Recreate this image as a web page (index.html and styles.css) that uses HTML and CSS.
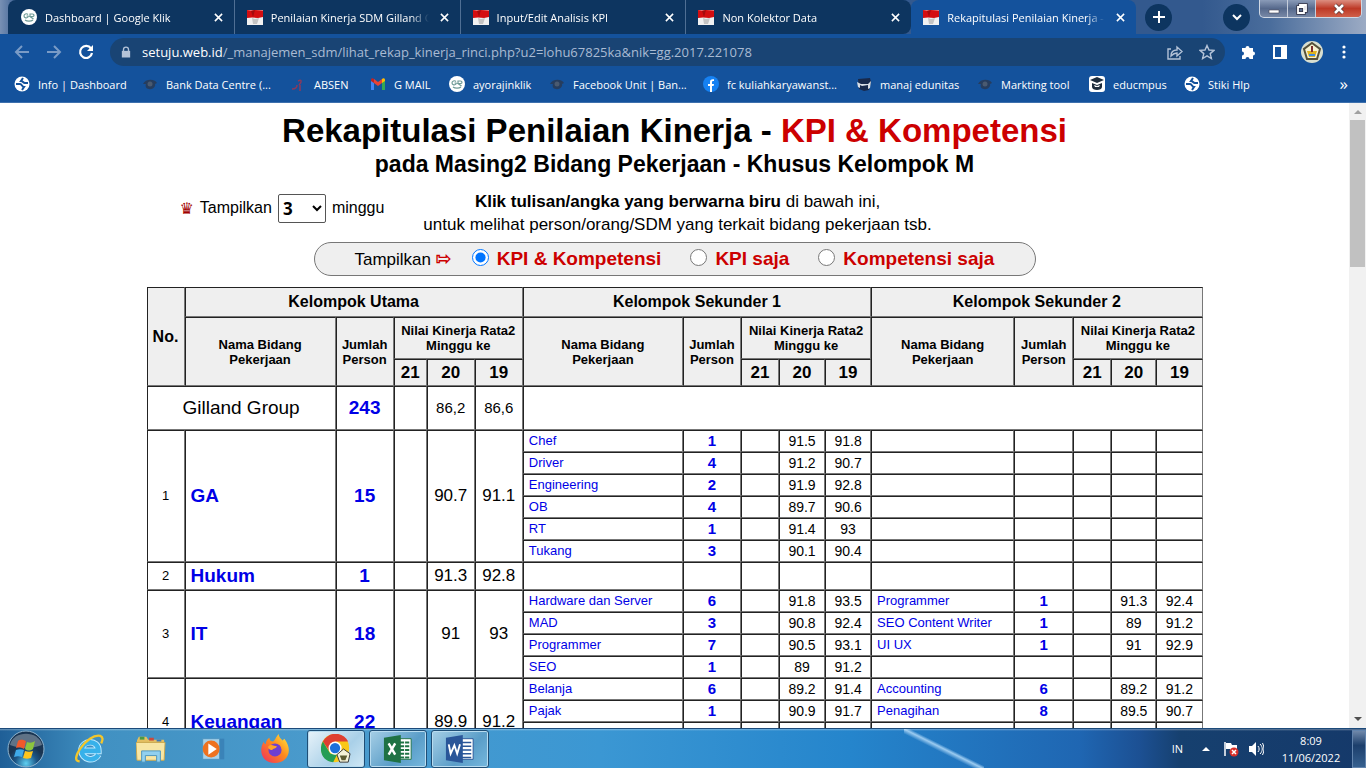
FILE: index.html
```
<!DOCTYPE html>
<html lang="id">
<head>
<meta charset="utf-8">
<title>Rekapitulasi Penilaian Kinerja - KPI &amp; Kompetensi</title>
<link rel="stylesheet" href="styles.css">
</head>
<body>
<svg class="defs" aria-hidden="true">
  <defs>
    <symbol id="flag" viewBox="0 0 16 16"><path fill="#f1f1f1" d="M0 1h16v15H0z"/><path fill="#d40d10" d="M0 1l4 .6 4-.6 8 .4V8l-5 1-6-.5L0 9z"/><path fill="#a30b0d" d="M4 2l2 6 2-7z"/><path fill="#c4c4c4" d="M5 9l3 1 4-1-2 6H6z"/></symbol>
    <symbol id="gk" viewBox="0 0 16 16"><circle cx="8" cy="8" r="8" fill="#fff"/><path fill="none" stroke="#6e9a96" stroke-width="1.200" d="M7 5.500C5.500 4 3 5 3 7s3 2.500 4 1V7H5.500M9 8V5h2.500c2 0 2 2.500 0 2.500H9l3.500 2.500M4 11c2 1.500 6 1.500 8 0"/></symbol>
    <symbol id="globe" viewBox="0 0 16 16"><circle cx="8" cy="8" r="7.500" fill="#fff"/><path fill="none" stroke="#14529c" stroke-width="2" d="M2 8h4c2 0 2 3 4 3l-2 3M14 7h-3c-2 0-2-2-4-2l2-3"/></symbol>
    <symbol id="eye" viewBox="0 0 16 16"><path fill="#263d5e" d="M1 8c2-5 11-6 14-1l-2 1c1 3-3 6-6 5C4 13 3 10 4 8z"/><circle cx="8" cy="8" r="2.500" fill="#4a5a70"/></symbol>
    <symbol id="x" viewBox="0 0 10 10"><path stroke="currentColor" stroke-width="1.700" d="M1 1l8 8M9 1L1 9"/></symbol>
  </defs>
</svg>

<header class="browser">
  <div class="tabstrip">
    <nav class="tabs">
      <div class="tab"><svg class="fav"><use href="#gk"/></svg><span class="tab-title">Dashboard | Google Klik</span><button class="close" aria-label="Tutup"><svg><use href="#x"/></svg></button></div>
      <div class="tab"><svg class="fav"><use href="#flag"/></svg><span class="tab-title">Penilaian Kinerja SDM Gilland G</span><button class="close" aria-label="Tutup"><svg><use href="#x"/></svg></button></div>
      <div class="tab"><svg class="fav"><use href="#flag"/></svg><span class="tab-title">Input/Edit Analisis KPI</span><button class="close" aria-label="Tutup"><svg><use href="#x"/></svg></button></div>
      <div class="tab"><svg class="fav"><use href="#flag"/></svg><span class="tab-title">Non Kolektor Data</span><button class="close" aria-label="Tutup"><svg><use href="#x"/></svg></button></div>
      <div class="tab active"><svg class="fav"><use href="#flag"/></svg><span class="tab-title">Rekapitulasi Penilaian Kinerja -</span><button class="close" aria-label="Tutup"><svg><use href="#x"/></svg></button></div>
    </nav>
    <button class="round" aria-label="Tab baru"><svg viewBox="0 0 12 12"><path d="M6 0v12M0 6h12"/></svg></button>
    <button class="round search" aria-label="Cari tab"><svg viewBox="0 0 12 12"><path d="M2 4l4 4 4-4"/></svg></button>
    <div class="window">
      <button aria-label="Minimalkan"><svg viewBox="0 0 12 12"><path fill="#fff" stroke="#445" stroke-width=".6" d="M1 7h10v3H1z"/></svg></button>
      <button aria-label="Pulihkan"><svg viewBox="0 0 12 12"><path fill="none" stroke="#334" stroke-width="3.400" d="M4 4V2h6v6H8M2 4h6v6H2z"/><path fill="none" stroke="#fff" stroke-width="1.800" d="M4 4V2h6v6H8M2 4h6v6H2z"/></svg></button>
      <button class="quit" aria-label="Tutup"><svg viewBox="0 0 12 12"><path stroke="#533" stroke-width="4" d="M2 2l8 8M10 2l-8 8"/><path stroke="#fff" stroke-width="2.600" d="M2 2l8 8M10 2l-8 8"/></svg></button>
    </div>
  </div>

  <div class="toolbar">
    <button class="tool dim" aria-label="Kembali"><svg viewBox="0 0 16 16"><path d="M15 8H2M8 2L2 8l6 6"/></svg></button>
    <button class="tool dim" aria-label="Maju"><svg viewBox="0 0 16 16"><path d="M1 8h13M8 2l6 6-6 6"/></svg></button>
    <button class="tool" aria-label="Muat ulang"><svg viewBox="0 0 16 16"><path stroke-width="2.200" d="M13 4.500A6 6 0 1 0 14 9"/><path fill="#fff" stroke="none" d="M15 1v6H9z"/></svg></button>
    <div class="omnibox">
      <svg class="lock" viewBox="0 0 12 14"><path fill="#b4c3d8" d="M1 5h10v8H1z"/><path fill="none" stroke="#b4c3d8" stroke-width="1.600" d="M3 6V3.500a3 3 0 0 1 6 0V6"/></svg>
      <p class="url"><b>setuju.web.id</b>/_manajemen_sdm/lihat_rekap_kinerja_rinci.php?u2=lohu67825ka&amp;nik=gg.2017.221078</p>
      <svg class="mark" viewBox="0 0 16 16"><path d="M4 5H1v10h12v-3M4 12c0-5 3-6 6-6V3l5 4.500-5 4.500V9c-3 0-4 1-6 3z"/></svg>
      <svg class="mark" viewBox="0 0 16 16"><path d="M8 1.500l2 4.500 5 .4-3.800 3.200L12.400 14.500 8 11.900l-4.400 2.600 1.200-4.900L1 6.400 6 6z"/></svg>
    </div>
    <button class="tool" aria-label="Ekstensi"><svg viewBox="0 0 16 16"><path fill="#fff" stroke="none" d="M2 4h3.500a2 2 0 1 1 4 0H13v3.500a2 2 0 1 1 0 4V15H9.500a2 2 0 1 0-4 0H2v-3.500a2 2 0 1 0 0-4z"/></svg></button>
    <button class="tool" aria-label="Panel samping"><svg viewBox="0 0 16 16"><path fill="#fff" stroke="none" d="M1 1h14v14H1z"/><path fill="#14529c" stroke="none" d="M3 3h6v10H3z"/></svg></button>
    <button class="tool avatar" aria-label="Profil"><svg viewBox="0 0 22 22"><circle cx="11" cy="11" r="11" fill="#d9dfd0"/><path fill="#f7f2d0" stroke="#55513a" d="M11 2l8 6-3 10H6L3 8z"/><path fill="#dfb21f" d="M6 10h10l-2 6H8z"/><path fill="#7c3030" d="M10 5h2v6h-2z"/><path fill="#3c8be0" d="M8 13h6v2H8z"/></svg></button>
    <button class="tool" aria-label="Menu"><svg viewBox="0 0 16 16"><g fill="#fff" stroke="none"><circle cx="8" cy="3" r="1.600"/><circle cx="8" cy="8" r="1.600"/><circle cx="8" cy="13" r="1.600"/></g></svg></button>
  </div>

  <nav class="bookmarks">
    <a href="#"><svg><use href="#globe"/></svg>Info | Dashboard</a>
    <a href="#"><svg><use href="#eye"/></svg>Bank Data Centre (...</a>
    <a href="#"><svg viewBox="0 0 16 16"><path fill="none" stroke="#8a3a5c" stroke-width="1.500" d="M8 5c4-2 4 1 1 4M2 13c3 0 5-1 5-4m3 0v6"/></svg>ABSEN</a>
    <a href="#"><svg viewBox="0 0 16 16"><path fill="#4285f4" d="M1 4l3 2v8H1z"/><path fill="#34a853" d="M12 6l3-2v10h-3z"/><path fill="#ea4335" d="M4 3l4 3 4-3v4l-4 3-4-3z"/><path fill="#c5221f" d="M1 4c0-2 2-2 3-1v4L1 5z"/><path fill="#fbbc04" d="M15 4c0-2-2-2-3-1v4l3-2z"/></svg>G MAIL</a>
    <a href="#"><svg><use href="#gk"/></svg>ayorajinklik</a>
    <a href="#"><svg><use href="#eye"/></svg>Facebook Unit | Ban...</a>
    <a href="#"><svg viewBox="0 0 16 16"><circle cx="8" cy="8" r="8" fill="#1681f2"/><path fill="#fff" d="M7 16v-6H5V8h2V6c0-2 1-3 4-2.700V5c-1.500 0-2 0-2 1v2h2l-.4 2H9v6z"/></svg>fc kuliahkaryawanst...</a>
    <a href="#"><svg viewBox="0 0 16 16"><path fill="#18294b" d="M2 3l12-1 1 4-2 8-5 1-5-2z"/><path fill="#d8dde4" d="M1 6l4 2h7l3-3-1 7-2 1V9L6 10 4 9v3L2 11z"/></svg>manaj edunitas</a>
    <a href="#"><svg><use href="#eye"/></svg>Markting tool</a>
    <a href="#"><svg viewBox="0 0 16 16"><rect width="16" height="16" rx="3" fill="#fff"/><path fill="#1d2c3c" d="M1 4l7-3 7 3-7 3zM3 7l5 2 5-2v4c0 4-10 4-10 0z"/><path fill="#fff" d="M5 9l3 1 3-1-1 2H6z"/></svg>educmpus</a>
    <a href="#"><svg><use href="#globe"/></svg>Stiki Hlp</a>
    <button class="more" aria-label="Lainnya">»</button>
  </nav>
</header>

<div class="viewport">
  <main class="page">
    <h1>Rekapitulasi Penilaian Kinerja - <span class="red">KPI &amp; Kompetensi</span></h1>
    <h2>pada Masing2 Bidang Pekerjaan - Khusus Kelompok M</h2>

    <form>
      <div class="intro">
        <div class="weeks">
          <span class="crown">♛</span>
          <label for="weeks">Tampilkan</label>
          <select id="weeks"><option>3</option></select>
          <span>minggu</span>
        </div>
        <p class="hint"><b>Klik tulisan/angka yang berwarna biru</b> di bawah ini,<br>untuk melihat person/orang/SDM yang terkait bidang pekerjaan tsb.</p>
      </div>
      <div class="filter">
        <span class="lead">Tampilkan <span class="arrow">⇰</span></span>
        <label><input type="radio" name="mode" checked>KPI &amp; Kompetensi</label>
        <label><input type="radio" name="mode">KPI saja</label>
        <label><input type="radio" name="mode">Kompetensi saja</label>
      </div>
    </form>

    <table class="recap">
      <colgroup>
        <col class="w38"><col class="w151"><col class="w58"><col class="w33"><col class="w48"><col class="w48">
        <col class="w160"><col class="w58"><col class="w38"><col class="w46"><col class="w46">
        <col class="w143"><col class="w59"><col class="w38"><col class="w45"><col class="w46">
      </colgroup>
      <thead>
        <tr class="groups"><th rowspan="3">No.</th><th colspan="5">Kelompok Utama</th><th colspan="5">Kelompok Sekunder 1</th><th colspan="5">Kelompok Sekunder 2</th></tr>
        <tr class="labels">
          <th rowspan="2">Nama Bidang<br>Pekerjaan</th><th rowspan="2">Jumlah<br>Person</th><th colspan="3">Nilai Kinerja Rata2<br>Minggu ke</th>
          <th rowspan="2">Nama Bidang<br>Pekerjaan</th><th rowspan="2">Jumlah<br>Person</th><th colspan="3">Nilai Kinerja Rata2<br>Minggu ke</th>
          <th rowspan="2">Nama Bidang<br>Pekerjaan</th><th rowspan="2">Jumlah<br>Person</th><th colspan="3">Nilai Kinerja Rata2<br>Minggu ke</th>
        </tr>
        <tr class="week-no"><th>21</th><th>20</th><th>19</th><th>21</th><th>20</th><th>19</th><th>21</th><th>20</th><th>19</th></tr>
      </thead>
      <tbody>
        <tr class="total"><td colspan="2" class="company">Gilland Group</td><td class="main"><a href="#">243</a></td><td></td><td>86,2</td><td>86,6</td><td colspan="10"></td></tr>

        <tr><td rowspan="6" class="no">1</td><td rowspan="6" class="main name"><a href="#">GA</a></td><td rowspan="6" class="main"><a href="#">15</a></td><td rowspan="6"></td><td rowspan="6" class="avg">90.7</td><td rowspan="6" class="avg">91.1</td>
          <td class="name"><a href="#">Chef</a></td><td class="count"><a href="#">1</a></td><td></td><td>91.5</td><td>91.8</td><td></td><td></td><td></td><td></td><td></td></tr>
        <tr><td class="name"><a href="#">Driver</a></td><td class="count"><a href="#">4</a></td><td></td><td>91.2</td><td>90.7</td><td></td><td></td><td></td><td></td><td></td></tr>
        <tr><td class="name"><a href="#">Engineering</a></td><td class="count"><a href="#">2</a></td><td></td><td>91.9</td><td>92.8</td><td></td><td></td><td></td><td></td><td></td></tr>
        <tr><td class="name"><a href="#">OB</a></td><td class="count"><a href="#">4</a></td><td></td><td>89.7</td><td>90.6</td><td></td><td></td><td></td><td></td><td></td></tr>
        <tr><td class="name"><a href="#">RT</a></td><td class="count"><a href="#">1</a></td><td></td><td>91.4</td><td>93</td><td></td><td></td><td></td><td></td><td></td></tr>
        <tr><td class="name"><a href="#">Tukang</a></td><td class="count"><a href="#">3</a></td><td></td><td>90.1</td><td>90.4</td><td></td><td></td><td></td><td></td><td></td></tr>

        <tr class="single"><td class="no">2</td><td class="main name"><a href="#">Hukum</a></td><td class="main"><a href="#">1</a></td><td></td><td class="avg">91.3</td><td class="avg">92.8</td><td></td><td></td><td></td><td></td><td></td><td></td><td></td><td></td><td></td><td></td></tr>

        <tr><td rowspan="4" class="no">3</td><td rowspan="4" class="main name"><a href="#">IT</a></td><td rowspan="4" class="main"><a href="#">18</a></td><td rowspan="4"></td><td rowspan="4" class="avg">91</td><td rowspan="4" class="avg">93</td>
          <td class="name"><a href="#">Hardware dan Server</a></td><td class="count"><a href="#">6</a></td><td></td><td>91.8</td><td>93.5</td><td class="name"><a href="#">Programmer</a></td><td class="count"><a href="#">1</a></td><td></td><td>91.3</td><td>92.4</td></tr>
        <tr><td class="name"><a href="#">MAD</a></td><td class="count"><a href="#">3</a></td><td></td><td>90.8</td><td>92.4</td><td class="name"><a href="#">SEO Content Writer</a></td><td class="count"><a href="#">1</a></td><td></td><td>89</td><td>91.2</td></tr>
        <tr><td class="name"><a href="#">Programmer</a></td><td class="count"><a href="#">7</a></td><td></td><td>90.5</td><td>93.1</td><td class="name"><a href="#">UI UX</a></td><td class="count"><a href="#">1</a></td><td></td><td>91</td><td>92.9</td></tr>
        <tr><td class="name"><a href="#">SEO</a></td><td class="count"><a href="#">1</a></td><td></td><td>89</td><td>91.2</td><td></td><td></td><td></td><td></td><td></td></tr>

        <tr><td rowspan="4" class="no">4</td><td rowspan="4" class="main name"><a href="#">Keuangan</a></td><td rowspan="4" class="main"><a href="#">22</a></td><td rowspan="4"></td><td rowspan="4" class="avg">89.9</td><td rowspan="4" class="avg">91.2</td>
          <td class="name"><a href="#">Belanja</a></td><td class="count"><a href="#">6</a></td><td></td><td>89.2</td><td>91.4</td><td class="name"><a href="#">Accounting</a></td><td class="count"><a href="#">6</a></td><td></td><td>89.2</td><td>91.2</td></tr>
        <tr><td class="name"><a href="#">Pajak</a></td><td class="count"><a href="#">1</a></td><td></td><td>90.9</td><td>91.7</td><td class="name"><a href="#">Penagihan</a></td><td class="count"><a href="#">8</a></td><td></td><td>89.5</td><td>90.7</td></tr>
        <tr><td></td><td class="count"><a href="#">7</a></td><td></td><td></td><td></td><td></td><td class="count"><a href="#">1</a></td><td></td><td></td><td></td></tr>
        <tr><td></td><td></td><td></td><td></td><td></td><td></td><td></td><td></td><td></td><td></td></tr>
      </tbody>
    </table>
  </main>
  <div class="scrollbar"><span class="up"></span><span class="thumb"></span><span class="down"></span></div>
</div>

<footer class="taskbar">
  <button class="start" aria-label="Start"><svg viewBox="0 0 38 38"><defs><radialGradient id="orb" cy=".9"><stop offset="0" stop-color="#5fd0f2"/><stop offset=".6" stop-color="#1c5687"/><stop offset="1" stop-color="#1a3552"/></radialGradient></defs><circle cx="19" cy="19" r="18" fill="url(#orb)" stroke="#8fb4cf"/><path fill="#fff" opacity=".3" d="M3 15C6 0 32 0 35 15c-10 4-22 4-32 0z"/><path fill="#f0592b" d="M11 11c3-2 5-1 8 0l-2 8c-3-2-5-2-8-1z"/><path fill="#8cc63e" d="M20 12c3 1 5 1 8-1l-2 8c-3 2-5 2-8 0z"/><path fill="#3fa9e8" d="M9 20c3-1 5-1 8 0l-2 7c-3-1-5-1-8 0z"/><path fill="#fdc51e" d="M18 21c3 1 5 1 8 0l-2 7c-3 1-5 1-8 0z"/></svg></button>
  <button class="task" aria-label="Internet Explorer"><svg viewBox="0 0 32 32"><path fill="none" stroke="#bfeaff" stroke-width="7" d="M26 22c-4 8-18 6-18-5 0-10 18-12 18 1H10"/><path fill="none" stroke="#37b1ea" stroke-width="5" d="M26 22c-4 8-18 6-18-5 0-10 18-12 18 1H10"/><path fill="none" stroke="#f4c62b" stroke-width="2.500" d="M6 29C-6 30 14-1 28 2c3 1 3 4 1 8"/></svg></button>
  <button class="task" aria-label="Penjelajah berkas"><svg viewBox="0 0 32 32"><path fill="#e4bf61" d="M1 7l2-4h8l2 3h17v22H2z"/><path fill="#4a9a45" d="M4 3h5v3H4z"/><path fill="#cc493b" d="M14 4h5v3h-5z"/><path fill="#3d79b8" d="M22 6h5v2h-5z"/><path fill="#f8e6a4" stroke="#c9a64d" d="M0 9h31l-1 19H1z"/><path fill="#91d0ef" stroke="#4a93bd" d="M6 30V18h20v12h-4v-7H10v7z"/></svg></button>
  <button class="task" aria-label="Media Player"><svg viewBox="0 0 32 32"><path fill="#3a83b8" d="M8 5h20v22H8z"/><path fill="#a8d2ea" stroke="#4d93bf" d="M5 5h18v22H5z"/><circle cx="14" cy="16" r="9" fill="#ee7220"/><path fill="#fff" d="M11 10l9 6-9 6z"/></svg></button>
  <button class="task" aria-label="Firefox"><svg viewBox="0 0 32 32"><defs><linearGradient id="fx" x1="1" x2="0" y2="1"><stop offset="0" stop-color="#fff044"/><stop offset=".45" stop-color="#ff8a1c"/><stop offset="1" stop-color="#ef2a62"/></linearGradient></defs><path fill="url(#fx)" d="M20 0c0 4 3 5 4 7l2-2c10 13 3 26-10 26C2 31-2 18 4 8c0 2 1 2 2 3 0-3 2-6 4-7 0 3 2 4 4 4 2-1 3-5 6-8z"/><circle cx="16" cy="17" r="7" fill="#6f3fd0"/><path fill="#ffa32a" d="M9 13c3-3 6 0 9 0-1 3-4 2-5 4-3 0-5-2-4-4z"/></svg></button>
  <button class="task open current" aria-label="Chrome"><svg viewBox="0 0 32 32"><circle cx="15" cy="15" r="15" fill="#f9c819"/><path fill="#de3f32" d="M2 8C9-4 24-2 29 8H15l-6 10z"/><path fill="#249d55" d="M2 8l8 13 7 1-4 8C1 29-3 17 2 8z"/><circle cx="15" cy="15" r="7" fill="#fff"/><circle cx="15" cy="15" r="5.500" fill="#1d70db"/><path fill="#f5f2d8" stroke="#333" d="M24 16l7 5-2 9h-9l-3-8z"/><path fill="#5d5c33" d="M20 23h8l-2 5h-4z"/></svg></button>
  <button class="task open" aria-label="Excel"><svg viewBox="0 0 32 32"><path fill="#fff" stroke="#1f7244" d="M16 5h14v22H16z"/><path stroke="#1f7244" stroke-width="2" d="M18 9h10M18 13h10M18 17h10M18 21h10M18 25h10"/><path stroke="#fff" d="M23 6v20"/><path fill="#1f7244" d="M1 4l18-3v30L1 28z"/><path stroke="#fff" stroke-width="2.600" d="M6 10l7 12M13 10L6 22"/></svg></button>
  <button class="task open" aria-label="Word"><svg viewBox="0 0 32 32"><path fill="#fff" stroke="#2a5699" d="M16 5h14v22H16z"/><path stroke="#2a5699" stroke-width="1.600" d="M18 9h10M18 13h10M18 17h10M18 21h10M18 25h10"/><path fill="#2a5699" d="M1 4l18-3v30L1 28z"/><path fill="none" stroke="#fff" stroke-width="2" d="M4 11l2 10 4-9 3 9 3-10"/></svg></button>
  <div class="tray">
    <span>IN</span>
    <svg class="caret" viewBox="0 0 8 8"><path fill="#fff" d="M0 6l4-4 4 4z"/></svg>
    <svg viewBox="0 0 16 16"><path stroke="#fff" stroke-width="1.500" d="M2 1v14"/><path fill="#fff" d="M3 2h5l1 2h5v6H8L7 8H3z"/><circle cx="11" cy="11" r="4.500" fill="#d8302a"/><path stroke="#fff" stroke-width="1.500" d="M9 9l4 4M13 9l-4 4"/></svg>
    <svg viewBox="0 0 16 16"><path fill="#fff" d="M1 5h3l4-4v14l-4-4H1z"/><path fill="none" stroke="#fff" d="M10 5c1.500 2 1.500 4 0 6M12 3c3 3 3 7 0 10M14.500 2c2 4 2 8 0 12"/></svg>
    <time datetime="2022-06-11T08:09">8:09<br>11/06/2022</time>
  </div>
  <button class="desk" aria-label="Tampilkan desktop"></button>
</footer>
</body>
</html>
```
FILE: styles.css
```
* { box-sizing: border-box; }
body {
  margin: 0;
  height: 100vh;
  display: flex;
  flex-direction: column;
  overflow: hidden;
  font-family: "Liberation Sans", Arial, sans-serif;
  color: #000;
  background: #fff;
}
button { border: 0; padding: 0; background: none; color: inherit; font: inherit; }
a { text-decoration: none; color: inherit; }
p, h1, h2 { margin: 0; }
svg { flex: none; fill: none; }
.defs { position: absolute; width: 0; height: 0; }

/* browser frame */
.browser {
  flex: none;
  background: #14529c;
  color: #fff;
  font: 11px "Open Sans", "Noto Sans", sans-serif;
  border-bottom: 1px solid #3d70ad;
}
.tabstrip {
  display: flex;
  align-items: center;
  height: 34px;
  padding-left: 8px;
  background: linear-gradient(90deg, #7890b4, #33598e 20px, #33598e 88%, #4a6d9c 93%, #9cabc4);
}
.tabs { display: flex; flex: 0 1 1128px; min-width: 0; height: 34px; }
.tab {
  flex: 1 1 0;
  min-width: 0;
  display: flex;
  align-items: center;
  gap: 8px;
  padding: 0 8px 0 12px;
  background: #0d3560;
  border-left: 1px solid #4f6f94;
}
.tab:first-child { border-left-color: transparent; border-top-left-radius: 8px; }
.tab:nth-child(4) { border-radius: 0 8px 8px 0; }
.tab.active { background: #14529c; border-left: 0; border-radius: 8px 8px 0 0; }
.fav { width: 16px; height: 16px; }
.tab-title {
  flex: 1;
  min-width: 0;
  overflow: hidden;
  white-space: nowrap;
  mask-image: linear-gradient(90deg, #000 88%, transparent);
}
.close { display: flex; padding: 4px 3px; }
.close svg { width: 9px; height: 9px; }
.round {
  flex: none;
  display: grid;
  place-items: center;
  width: 27px;
  height: 27px;
  margin-left: 9px;
  border-radius: 50%;
  background: #0d3560;
}
.round svg { width: 12px; height: 12px; stroke: #fff; stroke-width: 2; }
.search { margin-left: auto; margin-right: 9px; }
.window {
  align-self: flex-start;
  display: flex;
  height: 18px;
  margin-right: 4px;
  border: 1px solid #d0d8e4;
  border-top: 0;
  border-radius: 0 0 5px 5px;
  overflow: hidden;
  background: linear-gradient(#8a9bb8, #56698c 50%, #7788a6);
}
.window button { width: 28px; display: grid; place-items: center; border-right: 1px solid #c5cddb; }
.window .quit { width: 45px; border: 0; background: linear-gradient(#dc8e80, #bd3926 50%, #d0604a); }
.window svg { width: 12px; height: 12px; }

.toolbar { display: flex; align-items: center; height: 36px; padding: 0 6px 0 14px; }
.tool { flex: none; display: grid; place-items: center; width: 32px; height: 32px; }
.tool svg { width: 16px; height: 16px; stroke: #fff; stroke-width: 2; }
.tool.dim svg { stroke: #7a9bc6; }
.toolbar .tool:nth-child(-n+3) { justify-items: start; }
.tool.avatar svg { width: 22px; height: 22px; stroke: none; }
.omnibox {
  flex: 1;
  min-width: 0;
  display: flex;
  align-items: center;
  gap: 16px;
  height: 28px;
  margin-right: 7px;
  padding: 0 10px 0 11px;
  border-radius: 14px;
  background: #194474;
}
.lock { width: 10px; height: 13px; }
.url { flex: 1; min-width: 0; overflow: hidden; white-space: nowrap; font-size: 13px; line-height: 20px; color: #a9bbd3; margin-left: -5px; }
.url b { font-weight: 400; color: #fff; }
.mark { width: 16px; height: 16px; stroke: #b4c3d8; stroke-width: 1.400; }

.bookmarks {
  display: grid;
  grid-template-columns: 128px 148px 80px 79px 100px 154px 153px 121px 112px 95px 1fr auto;
  align-items: center;
  height: 32px;
  padding: 0 18px 4px 14px;
}
.bookmarks a { display: flex; align-items: center; gap: 8px; white-space: nowrap; }
.bookmarks svg { width: 16px; height: 16px; }
.bookmarks .more { font-size: 17px; line-height: 20px; }

/* page */
.viewport { flex: 1; min-height: 0; display: flex; overflow: hidden; }
.page { flex: 1; min-width: 0; display: flex; flex-direction: column; align-items: center; padding-top: 9px; }
h1 { font-size: 33px; line-height: 38px; }
h2 { font-size: 23px; line-height: 28px; }
.red { color: #c00; }
form { width: 1056px; max-width: 100%; display: flex; flex-direction: column; align-items: center; }
.intro { align-self: stretch; display: flex; align-items: center; gap: 39px; padding: 12px 33px 6px; }
.weeks { display: flex; align-items: center; gap: 6px; margin-bottom: 10px; white-space: nowrap; }
.crown { color: #a00000; font: bold 16px "DejaVu Sans", sans-serif; }
.weeks select {
  width: 48px;
  height: 29px;
  border: 1px solid #555;
  border-radius: 2px;
  background: #fff;
  font: bold 17px "Open Sans", sans-serif;
}
.hint { text-align: center; font-size: 17px; line-height: 23px; white-space: nowrap; }
.filter {
  display: flex;
  align-items: center;
  width: 722px;
  height: 34px;
  padding-left: 40px;
  border: 1px solid #777;
  border-radius: 17px;
  background: #efefef;
  white-space: nowrap;
}
.lead { margin-right: 20px; font-size: 17px; }
.arrow { color: #c00; font: bold 19px "DejaVu Sans", sans-serif; line-height: 20px; }
.filter label { display: flex; align-items: center; gap: 8px; margin-right: 29px; font-size: 19px; font-weight: bold; color: #c00; }
.filter input { width: 17px; height: 17px; margin: 0 0 3px; }

.recap {
  width: 1056px;
  margin-top: 11px;
  table-layout: fixed;
  border-collapse: separate;
  border-spacing: 0;
  font-size: 14px;
  text-align: center;
}
.w33 { width: 33px; } .w38 { width: 38px; } .w45 { width: 45px; } .w46 { width: 46px; }
.w48 { width: 48px; } .w58 { width: 58px; } .w59 { width: 59px; } .w143 { width: 143px; }
.w151 { width: 151px; } .w160 { width: 160px; }
.recap th, .recap td {
  height: 22px;
  padding: 0;
  line-height: 16px;
  border: 1px solid;
  border-color: #222 #777 #777 #222;
}
.recap th { background: #efefef; font-size: 16px; }
.recap .groups th { height: 30px; }
.recap .labels th { height: 42px; font-size: 13px; line-height: 15px; white-space: nowrap; }
.recap .week-no th { height: 27px; font-size: 17px; }
.recap .total td { height: 44px; font-size: 15px; }
.recap .single td { height: 28px; }
.recap a { color: #0000e6; }
.recap .name { text-align: left; padding-left: 5px; font-size: 13px; }
.recap .no { font-size: 13px; }
.recap .avg { font-size: 17px; }
.recap td.count { font-weight: bold; font-size: 15px; }
.recap td.main { font-weight: bold; font-size: 19px; }
.recap .total .company { font-size: 19px; }

.scrollbar { flex: none; width: 17px; background: #f1f1f1; display: flex; flex-direction: column; align-items: center; padding: 7px 0; }
.scrollbar .up, .scrollbar .down { border: 4px solid transparent; }
.scrollbar .up { border-top: 0; border-bottom: 4px solid #a0a0a0; }
.scrollbar .down { margin-top: auto; border-bottom: 0; border-top: 4px solid #505050; }
.thumb { width: 15px; height: 147px; margin-top: 6px; background: #c1c1c1; }

/* taskbar */
.taskbar {
  flex: none;
  height: 40px;
  display: flex;
  align-items: center;
  padding-left: 6px;
  border-top: 1px solid #1c4a7a;
  color: #fff;
  font: 11px "Open Sans", "Noto Sans", sans-serif;
  background:
    linear-gradient(rgba(255,255,255,.35), transparent 2px),
    linear-gradient(to top right, transparent 44%, #9ccbf0 50%, transparent 54%) 904px 0 / 80px 40px no-repeat,
    linear-gradient(90deg, #1f5f97, #4191c2 100px, #4a9bcd 330px, #3b97d3 600px, #2585cc 850px, #1f66b2 1080px, #1c5093 1140px, #16406f 1180px, #15396a);
}
.start { width: 40px; height: 38px; margin-right: 12px; }
.start svg { width: 38px; height: 38px; }
.task { display: grid; place-items: center; width: 62px; height: 38px; }
.task svg { width: 30px; height: 30px; }
.open { width: 58px; margin-left: 4px; border: 1px solid #1f4e76; border-radius: 3px; background: linear-gradient(135deg, #a6cfe6, #5a9dc8 60%, #76b8de); box-shadow: inset 0 0 0 1px #b8dcf0; }
.open.current { margin-left: 1px; background: linear-gradient(135deg, #e8f3fa, #a9d0e8 60%, #d0e8f5); }
.tray { margin-left: auto; display: flex; align-items: center; gap: 9px; }
.tray svg { width: 16px; height: 16px; }
.tray > span { margin-right: 10px; }
.tray .caret { width: 8px; height: 8px; margin-right: 4px; }
.tray time { width: 76px; text-align: center; line-height: 17px; }
.desk { width: 14px; height: 38px; margin-left: 3px; border: 1px solid #6284ad; background: linear-gradient(#6f88aa, #1c3f6c 40%, #36608f); }
```
